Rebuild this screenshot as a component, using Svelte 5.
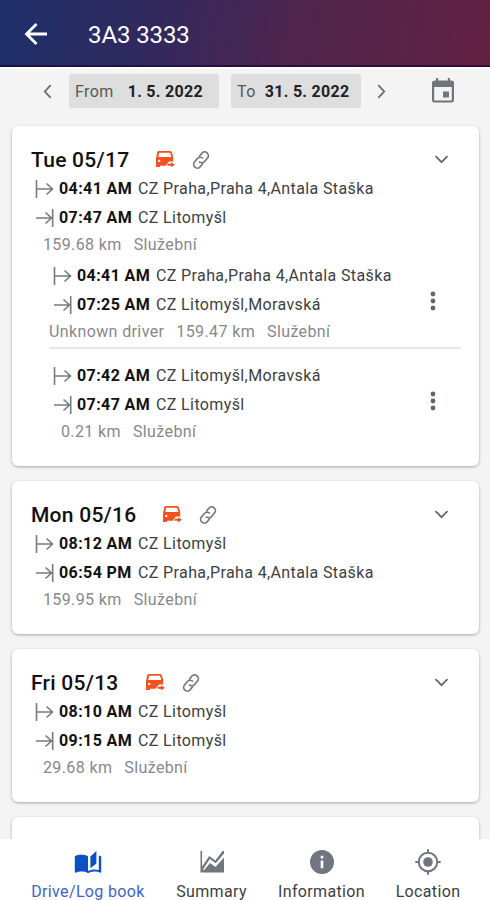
<script lang="ts">
	type Trip = {
		start: string;
		from: string;
		end: string;
		to: string;
		driver?: string;
		distance: string;
		purpose: string;
	};

	type Day = Trip & { label: string; trips: Trip[] };

	const days: Day[] = [
		{
			label: 'Tue 05/17',
			start: '04:41 AM',
			from: 'CZ Praha,Praha 4,Antala Staška',
			end: '07:47 AM',
			to: 'CZ Litomyšl',
			distance: '159.68 km',
			purpose: 'Služební',
			trips: [
				{
					start: '04:41 AM',
					from: 'CZ Praha,Praha 4,Antala Staška',
					end: '07:25 AM',
					to: 'CZ Litomyšl,Moravská',
					driver: 'Unknown driver',
					distance: '159.47 km',
					purpose: 'Služební'
				},
				{
					start: '07:42 AM',
					from: 'CZ Litomyšl,Moravská',
					end: '07:47 AM',
					to: 'CZ Litomyšl',
					distance: '0.21 km',
					purpose: 'Služební'
				}
			]
		},
		{
			label: 'Mon 05/16',
			start: '08:12 AM',
			from: 'CZ Litomyšl',
			end: '06:54 PM',
			to: 'CZ Praha,Praha 4,Antala Staška',
			distance: '159.95 km',
			purpose: 'Služební',
			trips: []
		},
		{
			label: 'Fri 05/13',
			start: '08:10 AM',
			from: 'CZ Litomyšl',
			end: '09:15 AM',
			to: 'CZ Litomyšl',
			distance: '29.68 km',
			purpose: 'Služební',
			trips: []
		}
	];

	const tabs = ['Drive/Log book', 'Summary', 'Information', 'Location'];
	let activeTab = $state('Drive/Log book');
</script>

{#snippet route(trip: Trip)}
	<div class="stop">
		<svg class="stop-icon" viewBox="0 0 20 20">
			<path d="M1.500 1v18M2 10h15.500M11.500 4.500l6 5.500-6 5.500" />
		</svg>
		<span class="time">{trip.start}</span>
		<span class="place">{trip.from}</span>
	</div>
	<div class="stop">
		<svg class="stop-icon" viewBox="0 0 20 20">
			<path d="M17.700 1v18M1 10h15.500M10.500 4.500l6 5.500-6 5.500" />
		</svg>
		<span class="time">{trip.end}</span>
		<span class="place">{trip.to}</span>
	</div>
	<div class="meta" class:with-driver={trip.driver}>
		{#if trip.driver}
			<span>{trip.driver}</span>
		{/if}
		<span>{trip.distance}</span>
		<span>{trip.purpose}</span>
	</div>
{/snippet}

<div class="screen">
	<header class="app-bar">
		<button class="icon-button" aria-label="Back">
			<svg class="back" viewBox="0 0 24 24">
				<path d="M23 12H3M12.500 2L2.500 12l10 10" />
			</svg>
		</button>
		<h1>3A3 3333</h1>
	</header>

	<div class="filter">
		<button class="icon-button prev" aria-label="Previous month">
			<svg class="step" viewBox="0 0 8 14"><path d="M7 1L1.500 7 7 13" /></svg>
		</button>
		<button class="chip from"><span>From</span><b>1. 5. 2022</b></button>
		<button class="chip to"><span>To</span><b>31. 5. 2022</b></button>
		<button class="icon-button next" aria-label="Next month">
			<svg class="step" viewBox="0 0 8 14"><path d="M1 1l5.500 6L1 13" /></svg>
		</button>
		<button class="icon-button calendar" aria-label="Calendar">
			<svg viewBox="0 0 22 25">
				<path
					fill-rule="evenodd"
					d="M4 0h2.200v2.500h9.600V0H18v2.500h1.500A2.500 2.500 0 0 1 22 5v17a2.500 2.500 0 0 1-2.500 2.500h-17A2.500 2.500 0 0 1 0 22V5a2.500 2.500 0 0 1 2.500-2.500H4zM2.200 9v12.800q0 .6.6.6h16.400q.6 0 .6-.6V9zM11 13.500h6v6h-6z"
				/>
			</svg>
		</button>
	</div>

	<main class="days">
		{#each days as day}
			<section class="card">
				<div class="card-head">
					<h2>{day.label}</h2>
					<svg class="car" viewBox="0 0 20 17">
						<path
							fill-rule="evenodd"
							d="M4 0h11q1.400 0 1.800 1.300L18.200 6v4.500H14l-3.500 4.200H5V16H1V7.500L2.200 1.300Q2.600 0 4 0zM4.200 1.700L3.200 6h13.200L15 1.700zM4.200 8.700a1.200 1.200 0 1 0 0 2.400 1.200 1.200 0 0 0 0-2.400z"
						/>
						<path d="M12.500 12.700H16v-1.500l4 2.500-4 2.600v-1.500h-3.500z" />
					</svg>
					<svg class="link" viewBox="0 0 20 20">
						<path
							transform="rotate(-50 10 10)"
							d="M8.500 13.700H4.300a3.700 3.700 0 0 1 0-7.400h4.500a3.700 3.700 0 0 1 3.600 4.300M11.500 6.300h4.200a3.700 3.700 0 0 1 0 7.400h-4.500a3.700 3.700 0 0 1-3.600-4.300"
						/>
					</svg>
					<svg class="chevron" viewBox="0 0 14 9"><path d="M1 1.200l6 6 6-6" /></svg>
				</div>
				{@render route(day)}
				{#each day.trips as trip}
					<div class="trip">
						<div class="trip-route">
							{@render route(trip)}
						</div>
						<svg class="more" viewBox="0 0 6 20">
							<circle cx="3" cy="3" r="2.400" />
							<circle cx="3" cy="10" r="2.400" />
							<circle cx="3" cy="17" r="2.400" />
						</svg>
					</div>
				{/each}
			</section>
		{/each}
		<section class="card"></section>
	</main>

	<nav class="tabs">
		{#each tabs as tab}
			<button class="tab" class:active={tab === activeTab} onclick={() => (activeTab = tab)}>
				<svg viewBox="0 0 28 26">
					{#if tab === 'Drive/Log book'}
						<path
							transform="translate(-.4 1) scale(1.2 1.08)"
							d="M19 1l-5 5v11l5-4.500V1zM1 6v14.650c0 .25.25.5.5.5.1 0 .15-.05.25-.05C3.100 20.450 5.050 20 6.500 20c1.950 0 4.050.4 5.500 1.500V6c-1.450-1.100-3.550-1.500-5.500-1.500S2.450 4.900 1 6zm22 13.500V6c-.6-.45-1.250-.75-2-1v13.500c-1.100-.35-2.300-.5-3.500-.5-1.700 0-4.150.65-5.500 1.500v2c1.350-.85 3.800-1.500 5.500-1.500 1.650 0 3.350.3 4.750 1.050.1.050.15.050.25.050.25 0 .5-.25.5-.5v-1.100z"
						/>
					{:else if tab === 'Summary'}
						<path
							d="M2.500 2h1.600v15.500l7.200-10.500 6 4.500L24.500 2H26v2.500l-8.200 9.800-6-4.300-6.800 10.500 1 .8 6-7.300 5.500 4L26 8.500V23.500H2.500z"
						/>
					{:else if tab === 'Information'}
						<path
							fill-rule="evenodd"
							d="M14 1a12 12 0 1 0 0 24 12 12 0 0 0 0-24zm-1.300 5.800h2.600v2.700h-2.600zm0 4.700h2.600v7.800h-2.600z"
						/>
					{:else}
						<circle cx="14" cy="13" r="4.800" />
						<circle class="ring" cx="14" cy="13" r="9.300" />
						<path d="M13 .3h2v3.500h-2zM13 22.200h2v3.500h-2zM1.300 12h3.500v2H1.300zM23.200 12h3.500v2h-3.500z" />
					{/if}
				</svg>
				<span>{tab}</span>
			</button>
		{/each}
	</nav>
</div>

<style>
	:global(body) {
		margin: 0;
		font-family: Roboto, 'Liberation Sans', sans-serif;
	}

	.screen {
		display: flex;
		flex-direction: column;
		width: 490px;
		height: 900px;
		overflow: hidden;
		background: #f4f4f4;
	}

	button {
		border: 0;
		padding: 0;
		background: none;
		font: inherit;
		color: inherit;
	}

	svg {
		display: block;
		flex: none;
	}

	.icon-button {
		display: flex;
	}

	.app-bar {
		display: flex;
		align-items: center;
		flex: none;
		box-sizing: border-box;
		height: 67px;
		padding: 2px 0 0 24px;
		border-bottom: 2px solid rgba(20, 0, 50, 0.6);
		background: linear-gradient(100deg, #1d3069 0%, #30295f 30%, #4d254e 58%, #642143 100%) border-box;
		color: #fff;
	}

	.back {
		width: 24px;
		height: 24px;
		fill: none;
		stroke: #fff;
		stroke-width: 2.8;
	}

	h1 {
		margin: 2px 0 0 40px;
		font-size: 24px;
		font-weight: 400;
		letter-spacing: -0.1px;
	}

	.filter {
		display: flex;
		align-items: center;
		flex: none;
		height: 34px;
		padding: 5px 0 0 43px;
		border-top: 2px solid #fff;
	}

	.step {
		width: 9px;
		height: 15px;
		fill: none;
		stroke: #6b6e73;
		stroke-width: 1.7;
	}

	.chip {
		display: flex;
		align-items: center;
		box-sizing: border-box;
		height: 34px;
		padding: 1px 0 0 6px;
		border-radius: 2px;
		background: #dedede;
		color: #55585c;
		font-size: 16px;
		letter-spacing: 0.4px;
	}

	.chip b {
		color: #202124;
		font-weight: 700;
		letter-spacing: 0.3px;
	}

	.from {
		width: 150px;
		margin-left: 17px;
	}

	.from b {
		margin-left: 14px;
	}

	.to {
		width: 130px;
		margin-left: 12px;
	}

	.to b {
		margin-left: 9px;
	}

	.next {
		margin-left: 16px;
	}

	.calendar {
		margin-left: 46px;
	}

	.calendar svg {
		width: 22px;
		height: 25px;
		margin-bottom: 2px;
		fill: #70757a;
	}

	.days {
		display: flex;
		flex-direction: column;
		flex: 1;
		gap: 15px;
		min-height: 0;
		padding: 18px 11px 0 12px;
		overflow: hidden;
	}

	.card {
		flex: none;
		box-sizing: border-box;
		min-height: 60px;
		padding: 19px 18px 23px 19px;
		border-radius: 6px;
		background: #fff;
		box-shadow: 0 1px 3px rgba(0, 0, 0, 0.32);
	}

	.card-head {
		display: flex;
		align-items: center;
		height: 29px;
	}

	h2 {
		margin: 0;
		color: #111;
		font-size: 21px;
		font-weight: 500;
		letter-spacing: 0.26px;
	}

	.car {
		width: 20px;
		height: 17px;
		margin-left: 26px;
		fill: #f4511e;
	}

	.link {
		width: 20px;
		height: 20px;
		margin-left: 16px;
		overflow: visible;
		fill: none;
		stroke: #74777b;
		stroke-width: 1.7;
	}

	.chevron {
		width: 15px;
		height: 9px;
		margin: 0 12px 0 auto;
		fill: none;
		stroke: #63666a;
		stroke-width: 1.8;
	}

	.stop {
		display: flex;
		align-items: center;
		height: 29px;
		padding-left: 4px;
		white-space: nowrap;
	}

	.stop-icon {
		width: 20px;
		height: 20px;
		fill: none;
		stroke: #777a7e;
		stroke-width: 1.6;
	}

	.time {
		width: 79px;
		margin-left: 4px;
		color: #111;
		font-size: 16px;
		font-weight: 700;
		letter-spacing: 0.4px;
	}

	.place {
		color: #3c3f43;
		font-size: 16px;
		letter-spacing: 0.38px;
	}

	.meta {
		display: flex;
		align-items: center;
		gap: 12px;
		height: 24px;
		padding-left: 12px;
		color: #85888c;
		font-size: 16px;
		letter-spacing: 0.38px;
	}

	.trip {
		display: flex;
		align-items: center;
		margin-left: 18px;
		padding: 12px 0 0;
	}

	.trip + .trip {
		border-top: 2px solid #e8e9ea;
	}

	.meta + .trip {
		padding: 5px 0 4px;
	}

	.trip-route {
		flex: 1;
	}

	.with-driver {
		padding-left: 0;
	}

	.more {
		width: 6px;
		height: 20px;
		margin: 0 25px 2px 0;
		fill: #63666a;
	}

	.tabs {
		display: flex;
		flex: none;
		height: 61px;
		background: #fff;
	}

	.tab {
		display: flex;
		flex-direction: column;
		align-items: center;
		width: 109px;
		padding-top: 10px;
		color: #3c3f43;
		font-size: 16px;
		letter-spacing: 0.35px;
	}

	.tab:first-child {
		width: 120px;
		margin-left: 28px;
	}

	.tab:nth-child(2) {
		width: 127px;
	}

	.tab:nth-child(3) {
		width: 93px;
	}

	.tab:last-child {
		width: 120px;
	}

	.tab svg {
		width: 28px;
		height: 26px;
		margin-bottom: 7px;
		fill: #70757f;
	}

	.tab .ring {
		fill: none;
		stroke: #70757f;
		stroke-width: 2;
	}

	.tab.active {
		color: #3d63c8;
	}

	.tab.active svg {
		fill: #0b50c4;
	}
</style>
